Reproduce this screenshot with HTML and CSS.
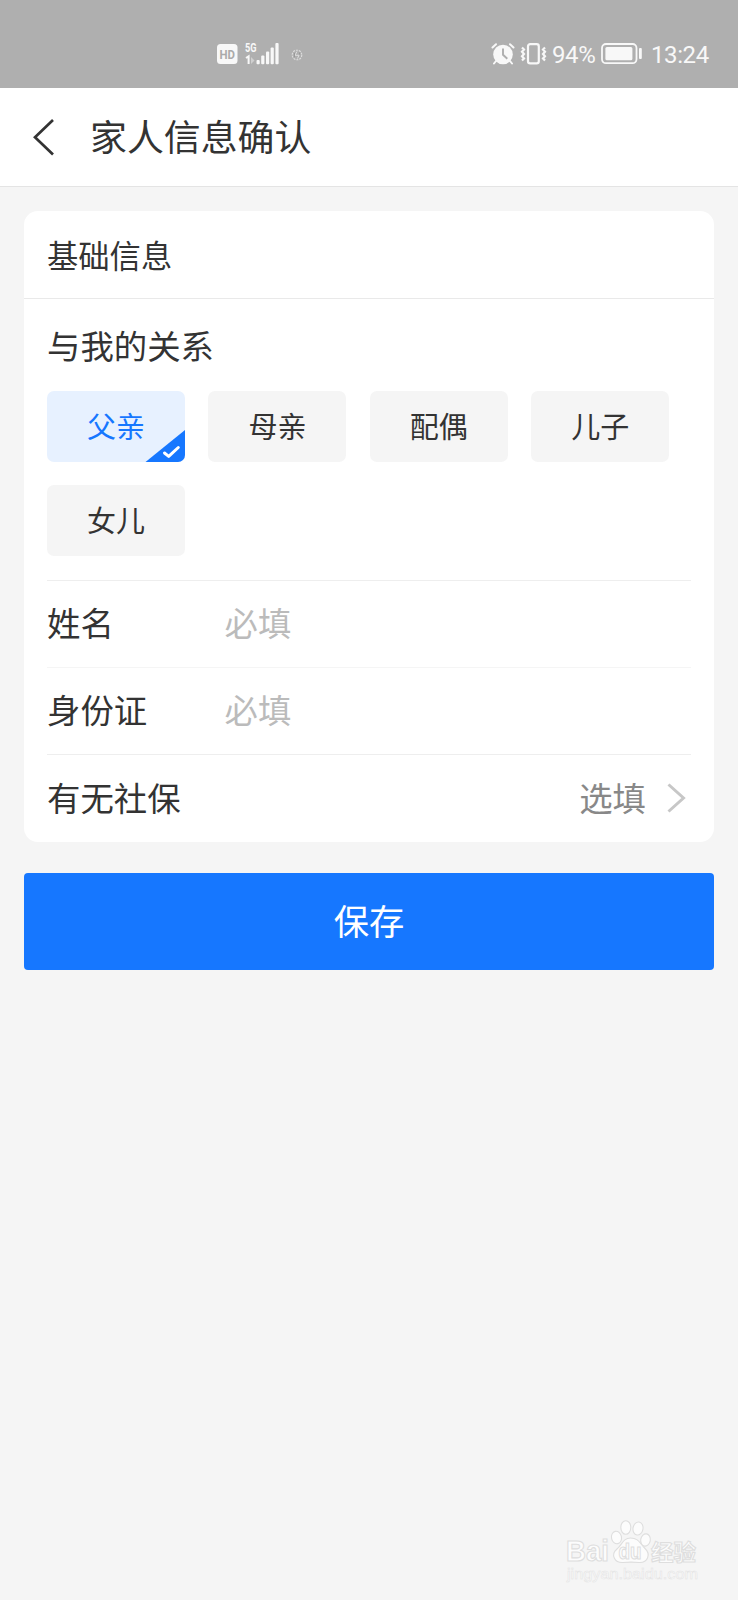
FILE: index.html
```html
<!DOCTYPE html>
<html lang="zh-CN">
<head>
<meta charset="utf-8">
<title>家人信息确认</title>
<link rel="stylesheet" href="styles.css">
</head>
<body>
<div class="status">
  <div class="status-left">
    <svg class="hd" width="22" height="22" viewBox="0 0 22 22"><rect x="1" y="1" width="20.5" height="20" rx="3.5" fill="#f8f8f8"/><text x="11.2" y="15.6" text-anchor="middle" textLength="15.5" lengthAdjust="spacingAndGlyphs" class="hd-text">HD</text></svg>
    <svg class="signal" width="36" height="24" viewBox="0 0 36 24"><text x="1" y="10.4" textLength="11.5" lengthAdjust="spacingAndGlyphs" class="net">5G</text><path d="M2 16l2.6-1.7V22" fill="none" stroke="#f8f8f8" stroke-width="2"/><path d="M7 15l3.5 3.5L7 22z" fill="#cfcfcf"/><g fill="#f8f8f8"><rect x="12.5" y="18" width="3.2" height="4.2" rx="1"/><rect x="17.2" y="13.5" width="3.2" height="8.7" rx="1"/><rect x="22" y="9.5" width="3.2" height="12.7" rx="1"/><rect x="26.6" y="5.5" width="3.2" height="16.7" rx="1"/><rect x="31.4" y="1" width="3.2" height="21.2" rx="1"/></g></svg>
    <svg class="sync" width="12" height="12" viewBox="0 0 12 12" fill="none"><circle cx="6" cy="6" r="4.8" stroke="#dedede" stroke-width="1.1" stroke-dasharray="2 1"/><path d="M6 2.5L4 6.3h4L6.5 9.5" stroke="#ddd"/><path d="M3.5 4v4.2M8.5 3.500v2" stroke="#8e8e8e" stroke-width=".7"/></svg>
  </div>
  <div class="status-right">
    <svg class="alarm" width="24" height="22" viewBox="0 0 24 22"><circle cx="12" cy="11.5" r="9.8" fill="#f8f8f8"/><path d="M1.5 4.5L5 1.2M22.5 4.5L19 1.2M5 18l-2 2.5M19 18l2 2.5" stroke="#f8f8f8" stroke-width="2" stroke-linecap="round"/><path d="M12 5.5v6.3l4.3 4" fill="none" stroke="#aeaeae" stroke-width="1.9"/></svg>
    <svg class="vibrate" width="28" height="22" viewBox="0 0 28 22" fill="none" stroke="#f8f8f8" stroke-width="2.2"><rect x="8" y="1.2" width="10.8" height="19.2" rx="2.2"/><path d="M2 4.5l2 2-2 2.3 2 2.2-2 2.3 2 2.2-2 2M25 4.5l-2 2 2 2.3-2 2.2 2 2.3-2 2.2 2 2"/></svg>
    <span class="percent">94%</span>
    <svg class="battery" width="42" height="22" viewBox="0 0 42 22"><rect x="1" y="1" width="34.5" height="19.2" rx="4" fill="none" stroke="#f8f8f8" stroke-width="1.8"/><rect x="4.4" y="4" width="27" height="13.3" rx="1.5" fill="#f8f8f8"/><rect x="38" y="5" width="2.8" height="11" rx="1" fill="#f8f8f8"/></svg>
    <span class="clock">13:24</span>
  </div>
</div>
<header class="header">
  <svg class="back" width="22" height="38" viewBox="0 0 22 38"><path d="M21 2L3 19.2 21 36.5" fill="none" stroke="#333" stroke-width="2.7"/></svg>
  <h1 class="title">家人信息确认</h1>
</header>
<main class="main">
  <section class="card">
    <h2 class="card-title">基础信息</h2>
    <div class="card-body">
      <div class="relation">
        <div class="label">与我的关系</div>
        <div class="chips">
          <div class="chip chip-active">父亲<svg class="corner" width="40" height="32" viewBox="0 0 40 32"><path d="M0.5 32L40 0v32z" fill="#1677ff"/><path d="M19.5 23l4.2 3.4L33.3 17.5" fill="none" stroke="#fff" stroke-width="3" stroke-linecap="round" stroke-linejoin="round"/></svg></div>
          <div class="chip">母亲</div>
          <div class="chip">配偶</div>
          <div class="chip">儿子</div>
          <div class="chip">女儿</div>
        </div>
      </div>
      <div class="row"><span class="name">姓名</span><span class="hint">必填</span></div>
      <div class="row row-light"><span class="name">身份证</span><span class="hint">必填</span></div>
      <div class="row row-last"><span class="name">有无社保</span><span class="value">选填</span><svg class="arrow" width="20" height="30" viewBox="0 0 20 30"><path d="M1.500 1.5L16.500 15 1.500 28.500" fill="none" stroke="#c7c7c7" stroke-width="3"/></svg></div>
    </div>
  </section>
  <button class="save">保存</button>
</main>
<footer class="brand">
  <svg width="138" height="66" viewBox="0 0 138 66">
    <g fill="#fcfcfc" stroke="#dedede" stroke-width="1.1">
      <ellipse cx="52.5" cy="21.5" rx="5" ry="6.3" transform="rotate(-12 52.5 21.5)"/>
      <ellipse cx="61.8" cy="11.5" rx="5" ry="6.8"/>
      <ellipse cx="74" cy="12.5" rx="5" ry="6.6" transform="rotate(10 74 12.5)"/>
      <ellipse cx="81.5" cy="24" rx="4.8" ry="6.2" transform="rotate(10 81.5 24)"/>
      <path d="M66.5 22C59 22 58 29 53 33C46 39 51 47 59 46.5C64 46 70 46 75 46.5C84 47 87 38 81 32.5C76 28 75 22 66.5 22Z"/>
      <text x="2" y="45" textLength="43" lengthAdjust="spacingAndGlyphs" class="brand-name">Bai</text>
      <text x="54.5" y="43" textLength="23" lengthAdjust="spacingAndGlyphs" class="brand-du">du</text>
      <text x="87" y="44" textLength="45" lengthAdjust="spacingAndGlyphs" class="brand-cn">经验</text>
    </g>
    <text x="3" y="63" textLength="131" lengthAdjust="spacingAndGlyphs" class="brand-url">jingyan.baidu.com</text>
  </svg>
</footer>
</body>
</html>
```

FILE: styles.css
```css
* { box-sizing: border-box; }
body {
  margin: 0;
  width: 738px;
  height: 1600px;
  display: flex;
  flex-direction: column;
  background: #f5f5f5;
  color: #333;
  font-family: "Noto Sans CJK SC", sans-serif;
  overflow: hidden;
}
.status {
  height: 88px;
  flex: none;
  background: #afafaf;
  display: flex;
  justify-content: space-between;
  padding: 43px 29px 0 216px;
  color: #f8f8f8;
}
.status-left, .status-right { display: flex; height: 22px; align-items: center; }
.signal { margin-left: 6px; overflow: visible; }
.sync { margin: 1px 0 0 11px; }
.hd-text { font: bold 13px Roboto, sans-serif; fill: #aaa; }
.net { font: bold 13px Roboto, sans-serif; fill: #f8f8f8; }
.percent, .clock { font: 24px/22px Roboto, sans-serif; white-space: nowrap; padding-top: 2px; }
.vibrate { margin-left: 5px; }
.percent { width: 45px; margin-left: 4px; letter-spacing: -0.4px; }
.battery { margin-left: 4px; }
.clock { margin-left: 8px; width: 58px; letter-spacing: -0.4px; }
.header {
  height: 99px;
  flex: none;
  background: #fff;
  border-bottom: 1px solid #e4e4e4;
  display: flex;
  align-items: center;
  padding: 0 32px 1px;
}
.title {
  margin: -3px 0 0 36px;
  font-size: 36.9px;
  font-weight: 400;
  line-height: 50px;
}
.main { padding: 24px 24px 0; }
.card { background: #fff; border-radius: 14px; }
.card-title {
  margin: 0;
  height: 88px;
  padding: 0 23px;
  border-bottom: 1px solid #e9e9e9;
  font-size: 31.3px;
  font-weight: 400;
  line-height: 87px;
}
.card-body { padding: 0 23px; }
.relation { height: 281px; padding-top: 22px; }
.label { font-size: 33.4px; line-height: 48px; }
.chips {
  margin-top: 21.6px;
  display: flex;
  flex-wrap: wrap;
  gap: 23.4px;
}
.chip {
  position: relative;
  width: 138px;
  height: 71px;
  border-radius: 7px;
  background: #f5f5f5;
  font-size: 29px;
  line-height: 68px;
  text-align: center;
  overflow: hidden;
}
.chip-active { background: #e7f1ff; color: #1677ff; }
.corner { position: absolute; right: 0; bottom: 0; }
.row {
  height: 87px;
  border-top: 1px solid #eee;
  display: flex;
  align-items: center;
  font-size: 33.4px;
  line-height: 48px;
  padding-bottom: 4px;
}
.row-light { border-color: #f5f5f5; }
.row-last { height: 88px; padding-bottom: 3px; }
.name { width: 177.6px; }
.hint { color: #bbb; }
.value { margin-left: auto; color: #888; }
.arrow { margin: 2px 4px 0 21px; }
.save {
  display: block;
  width: 690px;
  height: 97px;
  margin: 31px 0 0;
  padding: 0 0 4px;
  border: 0;
  border-radius: 4px;
  background: #1677ff;
  color: #fff;
  font: 35.3px/50px "Noto Sans CJK SC", sans-serif;
}
.brand { margin: auto 36px 18px auto; height: 66px; }
.brand svg { display: block; overflow: visible; }
.brand-name { font: bold 29px "Liberation Sans", sans-serif; }
.brand-du { font: bold 22px "Liberation Sans", sans-serif; }
.brand-cn { font: bold 22px "Noto Sans CJK SC", sans-serif; }
.brand-url { font: 15px "Liberation Sans", sans-serif; fill: #fcfcfc; stroke: #e3e3e3; stroke-width: 0.5px; }
```
